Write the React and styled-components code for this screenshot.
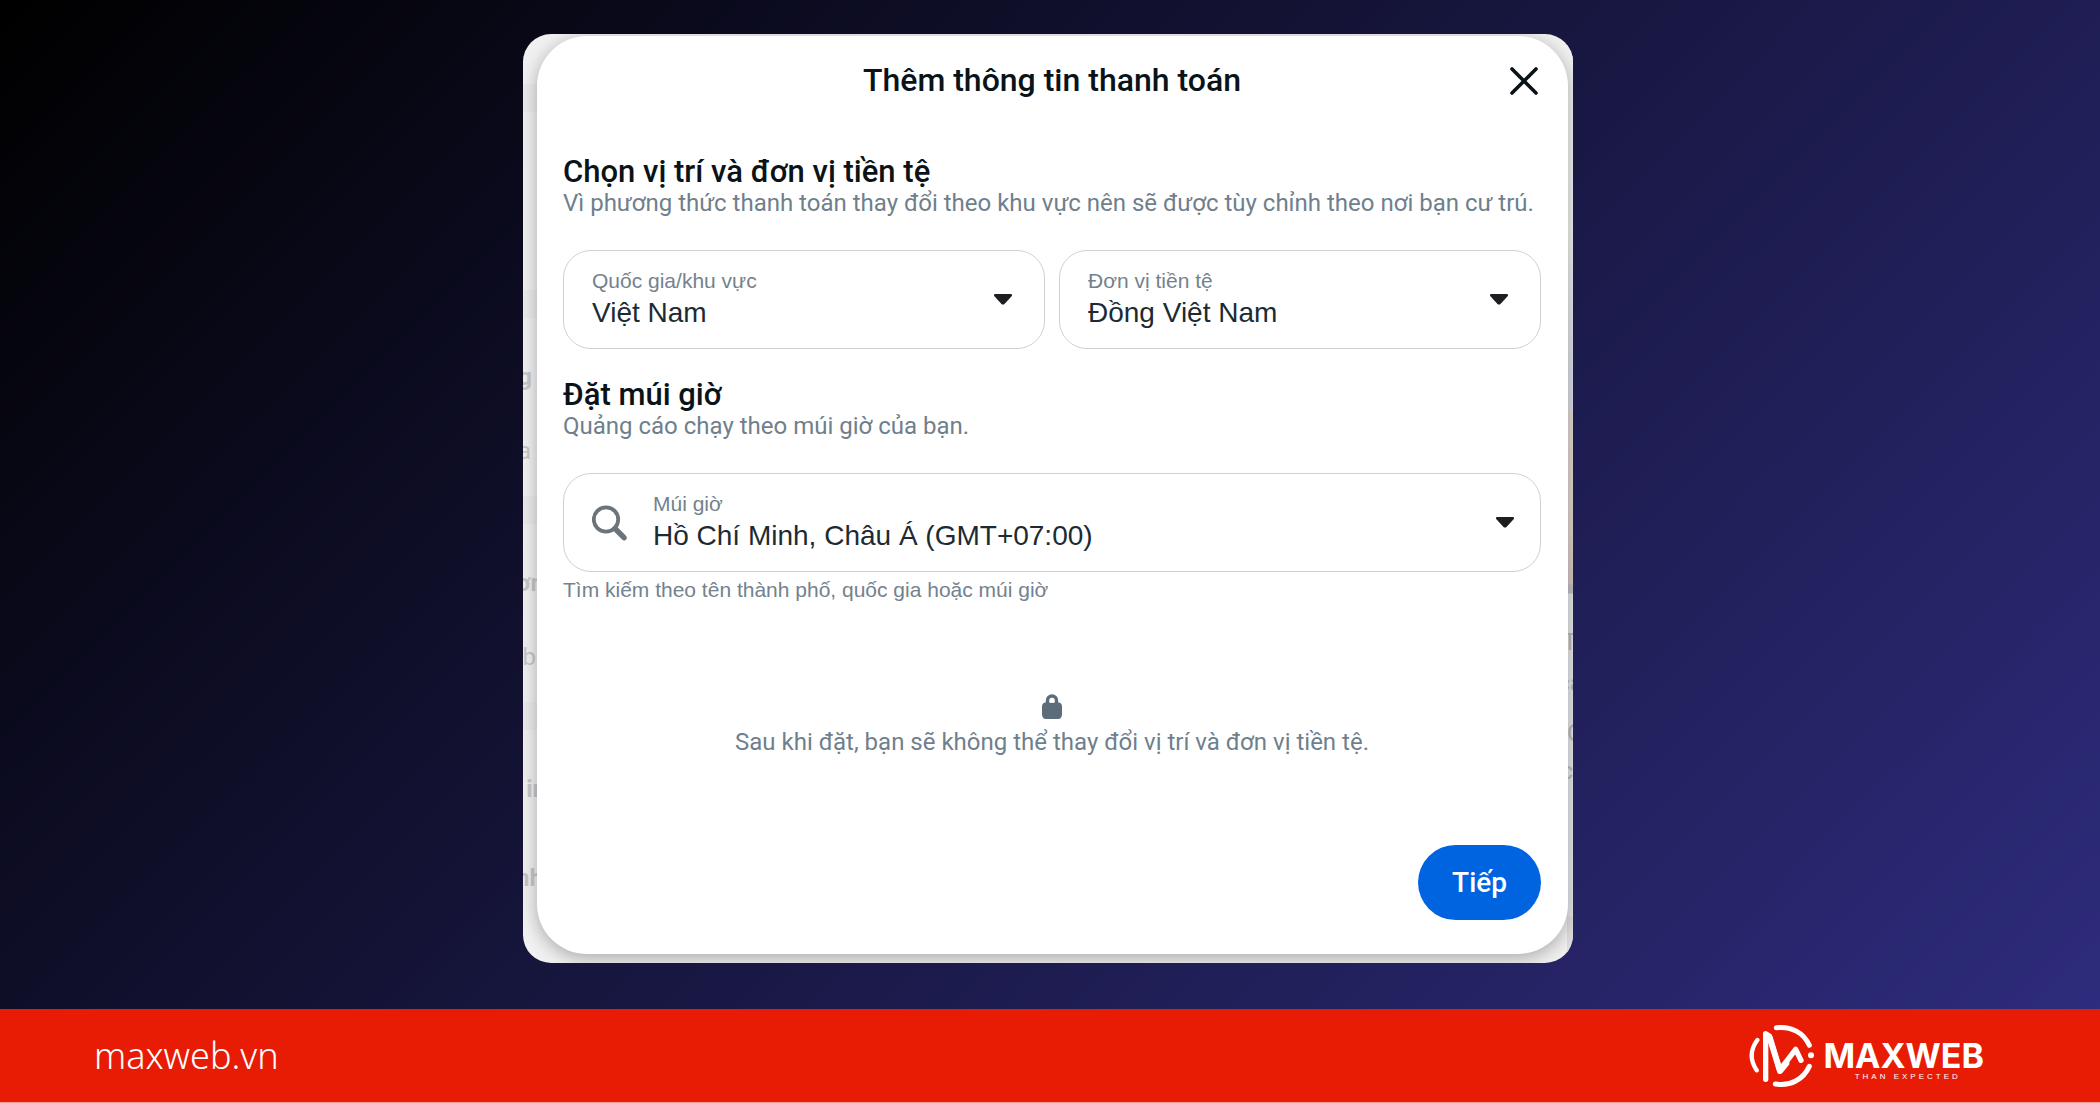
import React from "react";
import styled, { createGlobalStyle } from "styled-components";

const GlobalStyle = createGlobalStyle`
  * {
    box-sizing: border-box;
  }

  body {
    margin: 0;
    font-family: Roboto, "Noto Sans", sans-serif;
    color: #1c2b33;
  }
`;

const Page = styled.div`
  display: flex;
  flex-direction: column;
  min-height: 100vh;
  background: linear-gradient(135deg, #000000, #2f2d80);
`;

const Stage = styled.main`
  flex: 1;
  display: flex;
  justify-content: center;
  padding: 34px 4px 46px 0;
`;

const Card = styled.div`
  position: relative;
  display: flex;
  width: calc(50% + 2px);
  min-width: 720px;
  padding: 2px 5px 9px 14px;
  border-radius: 28px;
  background: #f1f1f1;
  overflow: hidden;
`;

/* Slices of the page that stays behind the dialog */
const BackdropLeft = styled.div`
  position: absolute;
  top: 0;
  left: 0;
  bottom: 0;
  width: 28px;
  padding-top: 50px;
`;

const BackdropGroup = styled.div`
  height: 206px;
  border-top: 28px solid #ececec;
  padding-top: 44px;
`;

const BackdropText = styled.div`
  display: flex;
  justify-content: flex-end;
  width: ${(props) => props.$width}px;
  height: ${(props) => props.$height || 74}px;
  font-size: 24px;
  line-height: 30px;
  font-weight: ${(props) => (props.$bold ? 700 : 400)};
  color: #c8c8c8;
`;

const BackdropRight = styled.div`
  position: absolute;
  top: 0;
  right: 0;
  bottom: 0;
  width: 6px;
  padding-top: 593px;
  background: linear-gradient(
    #f1f1f1 0,
    #f1f1f1 200px,
    #dcdde8 340px,
    #dcdde8 376px,
    #e3dbd3 377px,
    #e0d6cc 490px,
    #d6c8c4 550px,
    #bfc1c3 551px,
    #bfc1c3 559px,
    #e6e8ec 560px,
    #e6e8ec 882px,
    #dedede 883px
  );
`;

const BackdropGlyph = styled.div`
  display: flex;
  justify-content: ${(props) => props.$align};
  height: ${(props) => props.$height}px;
  font-size: 24px;
  line-height: 30px;
  color: #b9bbbd;
`;

const Dialog = styled.section`
  position: relative;
  flex: 1;
  display: flex;
  flex-direction: column;
  padding: 26px 27px 34px 26px;
  border-radius: 50px;
  background: #ffffff;
  box-shadow: 0 4px 18px rgba(0, 0, 0, 0.3);
`;

const DialogHeader = styled.header`
  display: grid;
  grid-template-columns: 36px 1fr 36px;
  align-items: center;
  margin-bottom: 58px;
`;

const DialogTitle = styled.h1`
  grid-column: 2;
  margin: 0;
  font-size: 32px;
  line-height: 36px;
  font-weight: 500;
  color: #0a1317;
  text-align: center;
`;

const CloseButton = styled.button`
  display: flex;
  justify-content: flex-end;
  padding: 2px 3px 0 0;
  border: 0;
  background: none;
  color: #0a1317;
  cursor: pointer;
`;

const Section = styled.div`
  margin-bottom: 30px;
`;

const SectionTitle = styled.h2`
  margin: 0;
  font-size: 31px;
  line-height: 32px;
  font-weight: 500;
  color: #0a1317;
`;

const Muted = styled.p`
  margin: 0;
  font-size: 24px;
  line-height: 30px;
  color: #6f7f8c;
`;

const FieldRow = styled.div`
  display: grid;
  grid-template-columns: repeat(${(props) => props.$columns}, 1fr);
  gap: 14px;
  margin-top: 32px;
`;

const Field = styled.div`
  position: relative;
  display: flex;
  align-items: center;
  gap: 26px;
  height: 99px;
  padding: 0 28px;
  border: 1px solid #ccd1d4;
  border-radius: 28px;
  font-family: "Liberation Sans", Arial, sans-serif;
`;

const FieldBody = styled.div`
  flex: 1;
  display: flex;
  flex-direction: column;
  padding-bottom: 2px;
`;

const FieldLabel = styled.label`
  font-size: 21px;
  line-height: 28px;
  color: #74828e;
`;

const Select = styled.select`
  width: 100%;
  height: 36px;
  padding: 0;
  border: 0;
  outline: 0;
  appearance: none;
  background: none;
  color: #1c2b33;
  font-family: inherit;
  font-size: 28px;
  line-height: 36px;
  cursor: pointer;
`;

const Caret = styled.svg`
  position: absolute;
  right: ${(props) => props.$right}px;
  pointer-events: none;
`;

const Hint = styled.p`
  margin: 4px 0 0;
  font-family: "Liberation Sans", Arial, sans-serif;
  font-size: 21px;
  line-height: 28px;
  color: #74828e;
`;

const Notice = styled.div`
  display: flex;
  flex-direction: column;
  align-items: center;
  gap: 8px;
  margin-top: 60px;
`;

const Actions = styled.footer`
  display: flex;
  justify-content: flex-end;
  margin-top: auto;
`;

const PrimaryButton = styled.button`
  height: 75px;
  padding: 0 34px;
  border: 0;
  border-radius: 38px;
  background: #0064e0;
  color: #ffffff;
  font-family: inherit;
  font-size: 28px;
  font-weight: 500;
  cursor: pointer;
`;

const SiteFooter = styled.footer`
  display: flex;
  align-items: center;
  justify-content: space-between;
  height: 94px;
  padding: 0 116px 0 94px;
  border-bottom: 1px solid #f79a90;
  background: #e81c05;
`;

const SiteLink = styled.a`
  color: #ffffff;
  font-family: "Noto Sans", sans-serif;
  font-size: 36px;
  line-height: 48px;
  font-weight: 300;
  text-decoration: none;
`;

const Brand = styled.div`
  display: flex;
  align-items: center;
  gap: 8px;
  color: #ffffff;
`;

const BrandText = styled.div`
  display: flex;
  flex-direction: column;
  align-items: center;
  padding-top: 8px;
`;

const BrandName = styled.span`
  font-family: Inter, sans-serif;
  font-size: 34px;
  line-height: 34px;
  font-weight: 700;
`;

const BrandTagline = styled.span`
  padding-left: 8px;
  font-family: "Liberation Sans", Arial, sans-serif;
  font-size: 8px;
  line-height: 8px;
  letter-spacing: 3px;
`;

const backdropGroups = [
  [{ text: "g", width: 9, bold: true }, { text: "a", width: 8 }],
  [{ text: "ơn", width: 21, bold: true }, { text: "ba", width: 26 }],
  [{ text: "in", width: 23, bold: true, height: 89 }, { text: "nh", width: 20, bold: true }],
];

const backdropGlyphs = [
  { text: "T", height: 41, align: "center" },
  { text: "ca", height: 50, align: "center" },
  { text: "C", height: 38, align: "flex-start" },
  { text: "c", height: 38, align: "flex-end" },
];

const CaretIcon = ({ right }) => (
  <Caret $right={right} width="18" height="11" viewBox="0 0 18 11" aria-hidden="true">
    <path d="M1.2 0h15.600c1.200 0 1.600 1.400.8 2.300l-7.100 7.600c-.8.9-2.200.9-3 0L.4 2.300C-.4 1.400 0 0 1.200 0z" fill="#1c1e21" />
  </Caret>
);

const CloseIcon = () => (
  <svg width="28" height="28" viewBox="0 0 28 28" aria-hidden="true">
    <path d="M2 2l24 24M26 2L2 26" fill="none" stroke="currentColor" strokeWidth="3.600" strokeLinecap="round" />
  </svg>
);

const SearchIcon = () => (
  <svg width="35" height="36" viewBox="0 0 35 36" aria-hidden="true">
    <circle cx="14" cy="14.500" r="12.200" fill="none" stroke="#6b737b" strokeWidth="3.800" />
    <path d="M23 23.500l9 9.200" stroke="#6b737b" strokeWidth="5.400" strokeLinecap="round" />
  </svg>
);

const LockIcon = () => (
  <svg width="20" height="25" viewBox="0 0 20 25" aria-hidden="true">
    <path d="M5.500 12V6.500a4.500 4.500 0 0 1 9 0V12" fill="none" stroke="#5d6c7b" strokeWidth="3.400" />
    <path d="M3.500 8.500h13Q20 8.500 20 13v7Q20 25 16 25H4Q0 25 0 20v-7Q0 8.500 3.500 8.500z" fill="#5d6c7b" />
    <path d="M8 8.800V7a2 2 0 0 1 4 0v1.800z" fill="#ffffff" />
  </svg>
);

const BrandMark = () => (
  <svg width="66" height="64" viewBox="16 22 198 192" fill="none" stroke="currentColor" strokeLinecap="round" strokeLinejoin="round" aria-hidden="true">
    <path d="M41 70Q8 115 39 161" strokeWidth="13" />
    <path d="M98 33C143 28 180 48 197 86M197 149C179 188 140 210 95 202" strokeWidth="15" />
    <path d="M66 188V51L77 58L108 161L156 98L172 131" strokeWidth="16" />
    <path d="M78 62L109 163L128 140" strokeWidth="18" />
    <circle cx="202" cy="116" r="9" fill="currentColor" stroke="none" />
  </svg>
);

const SelectField = ({ id, label, value, icon, caretRight }) => (
  <Field>
    {icon}
    <FieldBody>
      <FieldLabel htmlFor={id}>{label}</FieldLabel>
      <Select id={id} defaultValue={value}>
        <option value={value}>{value}</option>
      </Select>
    </FieldBody>
    <CaretIcon right={caretRight} />
  </Field>
);

const App = () => {
  return (
    <Page>
      <GlobalStyle />
      <Stage>
        <Card>
          <BackdropLeft aria-hidden="true">
            <BackdropGroup />
            {backdropGroups.map((group, index) => (
              <BackdropGroup key={index}>
                {group.map((item) => (
                  <BackdropText key={item.text} $width={item.width} $height={item.height} $bold={item.bold}>
                    {item.text}
                  </BackdropText>
                ))}
              </BackdropGroup>
            ))}
          </BackdropLeft>
          <BackdropRight aria-hidden="true">
            {backdropGlyphs.map((glyph) => (
              <BackdropGlyph key={glyph.text} $height={glyph.height} $align={glyph.align}>
                {glyph.text}
              </BackdropGlyph>
            ))}
          </BackdropRight>

          <Dialog role="dialog" aria-labelledby="dialog-title">
            <DialogHeader>
              <DialogTitle id="dialog-title">Thêm thông tin thanh toán</DialogTitle>
              <CloseButton type="button" aria-label="Đóng">
                <CloseIcon />
              </CloseButton>
            </DialogHeader>

            <Section>
              <SectionTitle>Chọn vị trí và đơn vị tiền tệ</SectionTitle>
              <Muted>
                Vì phương thức thanh toán thay đổi theo khu vực nên sẽ được tùy chỉnh theo nơi bạn cư trú.
              </Muted>
              <FieldRow $columns={2}>
                <SelectField id="country" label="Quốc gia/khu vực" value="Việt Nam" caretRight={32} />
                <SelectField id="currency" label="Đơn vị tiền tệ" value="Đồng Việt Nam" caretRight={32} />
              </FieldRow>
            </Section>

            <Section>
              <SectionTitle>Đặt múi giờ</SectionTitle>
              <Muted>Quảng cáo chạy theo múi giờ của bạn.</Muted>
              <FieldRow $columns={1}>
                <SelectField
                  id="timezone"
                  label="Múi giờ"
                  value="Hồ Chí Minh, Châu Á (GMT+07:00)"
                  icon={<SearchIcon />}
                  caretRight={26}
                />
              </FieldRow>
              <Hint>Tìm kiếm theo tên thành phố, quốc gia hoặc múi giờ</Hint>
            </Section>

            <Notice>
              <LockIcon />
              <Muted>Sau khi đặt, bạn sẽ không thể thay đổi vị trí và đơn vị tiền tệ.</Muted>
            </Notice>

            <Actions>
              <PrimaryButton type="button">Tiếp</PrimaryButton>
            </Actions>
          </Dialog>
        </Card>
      </Stage>

      <SiteFooter>
        <SiteLink href="#">maxweb.vn</SiteLink>
        <Brand>
          <BrandMark />
          <BrandText>
            <BrandName>MAXWEB</BrandName>
            <BrandTagline>THAN EXPECTED</BrandTagline>
          </BrandText>
        </Brand>
      </SiteFooter>
    </Page>
  );
};

export default App;
